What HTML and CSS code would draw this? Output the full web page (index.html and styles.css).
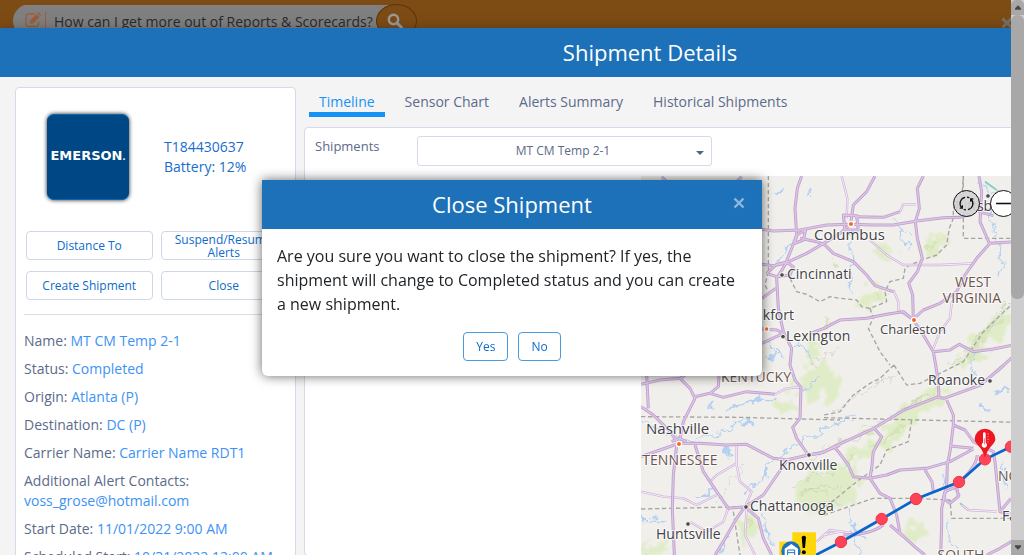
FILE: index.html
```html
<!DOCTYPE html>
<html lang="en">
<head>
<meta charset="utf-8">
<title>Shipment Details</title>
<link rel="stylesheet" href="styles.css">
</head>
<body>
<div class="viewport">
  <header class="topbar">
    <form class="search">
      <svg class="search-edit" viewBox="0 0 16 16" aria-hidden="true"><path d="M10 2H3.500Q1 2 1 4.500V12Q1 14.500 3.500 14.500H11Q13.500 14.500 13.500 12V9.500" fill="none" stroke="currentColor" stroke-width="1.300"/><path d="M5 11.500V8.500L11.500 2 14.500 5 8 11.500ZM12.300 1.200L13.300.300 16 3 15.200 4Z" fill="currentColor"/><path d="M6.200 8.800L7.700 10.300" stroke="#808080"/></svg>
      <input class="search-input" type="text" aria-label="Search help" value="How can I get more out of Reports &amp; Scorecards?">
      <button class="search-button" type="button" aria-label="Search"><svg viewBox="0 0 16 16"><circle cx="6.500" cy="6.500" r="4.700" fill="none" stroke="currentColor" stroke-width="2.400"/><path d="M10 10L14.500 14.500" stroke="currentColor" stroke-width="3" stroke-linecap="round"/></svg></button>
    </form>
    <button class="topbar-close" type="button" aria-label="Dismiss"><svg class="cross" viewBox="0 0 12 12"><path d="M1.500 1.500L10.500 10.500M10.500 1.500L1.500 10.500" stroke="currentColor" stroke-width="3"/></svg></button>
  </header>

  <section class="details">
    <h1 class="dialog-title">Shipment Details</h1>
    <div class="details-body">
      <aside class="card">
        <div class="device">
          <div class="logo"><span>EMERSON<small>.</small></span></div>
          <div class="device-info">T184430637<br>Battery: 12%</div>
        </div>
        <div class="actions">
          <button class="btn" type="button">Distance To</button>
          <button class="btn" type="button">Suspend/Resume Alerts</button>
          <button class="btn" type="button">Create Shipment</button>
          <button class="btn" type="button">Close</button>
        </div>
        <dl class="facts">
          <div><dt>Name:</dt> <dd>MT CM Temp 2-1</dd></div>
          <div><dt>Status:</dt> <dd>Completed</dd></div>
          <div><dt>Origin:</dt> <dd>Atlanta (P)</dd></div>
          <div><dt>Destination:</dt> <dd>DC (P)</dd></div>
          <div><dt>Carrier Name:</dt> <dd>Carrier Name RDT1</dd></div>
          <div><dt>Additional Alert Contacts:</dt> <dd>voss_grose@hotmail.com</dd></div>
          <div><dt>Start Date:</dt> <dd>11/01/2022 9:00 AM</dd></div>
          <div><dt>Scheduled Start:</dt> <dd>10/31/2022 12:00 AM</dd></div>
        </dl>
      </aside>

      <div class="main">
        <nav class="tabs">
          <a class="tab tab-active" href="#timeline">Timeline</a>
          <a class="tab" href="#sensor">Sensor Chart</a>
          <a class="tab" href="#alerts">Alerts Summary</a>
          <a class="tab" href="#history">Historical Shipments</a>
        </nav>
        <div class="panel">
          <div class="picker">
            <label for="shipment">Shipments</label>
            <div class="select-wrap">
              <select id="shipment"><option>MT CM Temp 2-1</option></select>
              <svg viewBox="0 0 8 4" aria-hidden="true"><path d="M0 0H8L4 4Z" fill="currentColor"/></svg>
            </div>
          </div>
          <div class="map">
            <svg class="map-canvas" viewBox="0 0 640 379" role="img" aria-label="Shipment route map">
              <defs>
                <filter id="rough" filterUnits="userSpaceOnUse" x="0" y="0" width="1200" height="1200"><feTurbulence type="fractalNoise" baseFrequency=".035" numOctaves="3" seed="4"/><feDisplacementMap in="SourceGraphic" scale="42" xChannelSelector="R" yChannelSelector="G"/></filter>
                <filter id="soft" filterUnits="userSpaceOnUse" x="0" y="0" width="1200" height="1200"><feTurbulence type="fractalNoise" baseFrequency=".03" numOctaves="3" seed="9" result="n"/><feDisplacementMap in="SourceGraphic" in2="n" scale="90" xChannelSelector="R" yChannelSelector="G"/><feGaussianBlur stdDeviation="3"/></filter>
                <g id="major">
                  <path d="M485 3L472 40 465 100 470 180 455 220 435 270 410 310 415 400 430 470 455 520 450 570 465 615 483 637 480 730 458 757 470 790 505 840"/>
                  <path d="M366 163L400 168 480 165 560 150 632 148 700 150 760 150 830 138 910 128 960 127 1000 115"/>
                  <path d="M435 265L500 235 560 200 600 175 632 147M632 145L640 90 680 50 705 3M645 125L730 127 780 110"/>
                  <path d="M850 3L832 40 838 100 826 140 832 190 847 250 832 290 806 325 818 360 820 435"/>
                  <path d="M480 190L530 200 555 210 580 235 640 260 680 300 705 332 760 350"/>
                  <path d="M820 435L790 410 740 418 680 430 600 435 552 460 510 475M366 462L410 465 430 475M366 370L408 340M366 505L430 475M366 268L400 272 435 265M380 295L410 268 440 262 460 275 450 300 410 305 380 295M470 180L497 165 490 195 465 205 470 180M610 120L650 122 655 165 615 165Z"/>
                  <path d="M820 432L850 405 900 385 950 350 975 300 1010 250 1050 205 1130 200M1050 210L1020 140 1025 50 1017 3M1015 110L1060 122"/>
                  <path d="M820 435L850 480 880 530 930 525 958 508 1000 530 1060 522 1130 508M880 530L887 570 895 620 897 670M1070 590L1130 535"/>
                  <path d="M1092 570L1022 630 912 670 890 667 792 705 702 760 582 815 550 832 505 840 440 855 400 850 320 808 260 810 180 805 117 805 60 825 3 845"/>
                  <path d="M920 675L940 720 940 750 930 830 922 870 920 930 905 1000 905 1050 902 1140M940 750L975 765 1000 800 1060 830 1065 860 1080 1010 1130 1020M930 813L1000 820M1000 822L930 860 860 880 780 885 740 900 690 910 640 905 625 870 595 830 582 815M1012 840Q1010 870 970 910M1010 865Q1003 880 960 920"/>
                  <path d="M702 760L725 785 700 830 695 880 690 910 720 955 750 970 770 1020 780 1075 830 1120 855 1140M730 1050Q690 1080 610 1080M855 885L876 920 880 950M750 1050L790 1085M1080 1010L1113 970M1040 1140L1080 1120 1130 1090"/>
                  <path d="M915 950L950 935 955 965 930 985 910 970ZM110 810L100 900 97 1000 103 1140M117 807L130 740 165 670 150 640 120 610M165 665L210 655 250 667 320 650 405 658M117 807L90 770 40 720 3 695M20 600L25 700M3 628L60 615 120 610 150 590M237 600L235 635 210 655"/>
                  <path d="M165 810L190 890 230 950 265 1000 315 995 370 960 440 858M315 995L290 1030 250 1100 225 1140M315 995L355 1030 370 1090 395 1140M505 840L540 835 600 810M95 800L117 790 140 800M65 5L80 20M305 5L290 20"/>
                </g>
                <g id="minor">
                  <path d="M620 130L622 70 605 3M780 110L790 88 828 88M690 195L740 240 790 270 900 270 1000 265M760 345L775 380 775 405 820 435M880 520L900 470 930 430 935 385 950 350M405 658L440 640 483 637"/>
                  <path d="M290 810L290 870 300 920 335 950 315 995M290 865L230 900 210 920M3 950L70 965 130 970 170 990 230 960M265 1000L250 1040 200 1070 150 1040M320 1000L315 1080 345 1140M530 1100L570 1065 640 1075M552 1080L600 1070M965 990L985 1005 1070 1010M945 940L958 960 930 985"/>
                </g>
              </defs>
              <rect width="640" height="379" fill="#f1efeb"/>
              <g transform="translate(-1 -1) scale(.333333)" stroke-linejoin="round">
                <g filter="url(#soft)" fill="#e0ecc8">
                  <path d="M690 220L740 200 765 230 730 245ZM850 200L890 180 920 200 890 245 850 250ZM660 350L700 335 740 370 710 400 665 395ZM500 520L540 500 550 540 500 570Z"/>
                  <path d="M930 600L980 520 1020 470 1090 390 1130 430 1050 510 970 580 920 600ZM890 690L930 640 900 640 800 690 700 800 610 830 620 860 720 830 780 780ZM460 950L490 910 552 870 640 870 660 930 620 990 552 1020 480 1000Z"/>
                  <path d="M480 590L550 570 600 600 600 650 540 690 470 650ZM300 1040L350 1010 350 1070 310 1110ZM10 1110L60 1095 80 1130 10 1140ZM790 1060L850 1040 860 1100 810 1090ZM410 680L460 660 480 720 420 710Z"/>
                </g>
                <g fill="none" stroke="#d3e2b2" stroke-width="9" opacity=".8" filter="url(#rough)">
                  <path d="M575 260L590 270M570 430L560 460M700 360L720 370M860 220L890 200M690 820L740 790 800 750M1000 520L1040 460 1090 430M800 700L860 660M600 880L650 840M480 960L520 940 560 960M500 1010L580 1000M320 1070L330 1030M960 570L1010 530M640 800L700 770"/>
                </g>
                <g fill="none" stroke="#c3c8bb" stroke-width="3" opacity=".6" filter="url(#rough)">
                  <path d="M1113 390L1060 450 1000 530 930 570M1100 380L1040 460 970 540M575 720L650 660 730 620 790 600M580 810L700 750 800 700 900 640M500 870L570 810 640 780M460 940L520 900 590 890M470 960L540 930 610 940M500 1000L550 980 620 990M230 980L320 860M510 570L600 520"/>
                </g>
                <g fill="none" stroke="#b3d0f3" stroke-width="4" filter="url(#rough)">
                  <path d="M390 500L400 540 410 520 430 550M375 540L400 545 420 530M455 520L490 510 520 560M400 270L440 230 455 200M765 125L780 160 820 180M782 165L790 200 810 220M1050 100L1060 170 1075 220 1085 270 1080 300M1020 20L1040 60 1080 40M632 170L635 260 630 360M1010 540L990 560 1000 600"/>
                  <path d="M210 680L212 710M3 735L40 755 90 780 140 790 200 785 250 770 290 740 330 725M320 690L370 670 410 670M250 820L265 850M170 960L210 950 230 945M320 960L340 930 370 910 385 870 430 830 490 800 560 760 650 720M3 1030L80 1035M260 1090L240 1140M370 1020L380 1080 400 1110M540 600L500 640 460 630M630 1060L650 1100 660 1140M630 1000L640 1060 670 1090M910 890L905 940M922 1030L925 1080 950 1120M1085 860L1095 950"/>
                </g>
                <g fill="none" stroke="#b3d0f3" stroke-width="8" filter="url(#rough)">
                  <path d="M260 705L290 690 340 680 370 670M213 680V705M250 820L270 840M310 735L340 750M180 960L210 958M375 910L385 880M1070 650L1090 645 1100 655M1025 695H1040M390 540L405 550M410 48L435 44M505 50H515M910 900V930M640 1050L655 1080M375 1060L385 1090M265 1080L250 1110"/>
                </g>
                <g fill="none" stroke="#a5a5a4" stroke-width="4" stroke-dasharray="13 8">
                  <path d="M385 3V290M3 725L300 727 600 735M552 728L1130 742M3 1002L315 995M280 1010L300 1140M970 3V190H1130"/>
                  <path d="M385 290L375 330 385 350M450 310L470 350 500 358 540 380 570 365 600 370 650 375 665 395 690 400 740 380 735 350 750 320 790 310 795 280 810 270 860 250 890 240 920 210 928 160 940 130 940 100 965 80 970 3M690 400L700 430 685 460 720 530 750 570M762 570L720 610 690 625 640 660 600 710 552 720M762 570L800 630 840 625 870 610 970 560 1030 470 1113 390M815 735L805 800 740 825 720 870 650 920 552 1000M552 1020L700 970 820 970 930 975 935 1030H1130"/>
                </g>
                <path d="M1035 20L1070 45M960 985L985 1005" stroke="#86d2bd" stroke-width="6"/>
                <g fill="none"><use href="#minor" stroke="#ceb0dc" stroke-width="7"/><use href="#minor" stroke="#f6f0f6" stroke-width="3"/><use href="#major" stroke="#bf9fcf" stroke-width="9"/><use href="#major" stroke="#dcc6e4" stroke-width="4"/></g>
                <g fill="#4b4b4b" stroke="#f6f6f6" stroke-width="3"><circle cx="426" cy="300" r="7"/><circle cx="429" cy="485" r="7"/><circle cx="507" cy="840" r="7"/><circle cx="318" cy="996" r="7"/><circle cx="144" cy="1047" r="7"/><circle cx="1050" cy="618" r="7"/><circle cx="1044" cy="63" r="7"/></g>
                <g fill="#f46a25" stroke="#fff" stroke-width="4"><circle cx="633" cy="147" r="8"/><circle cx="380" cy="462" r="7"/><circle cx="822" cy="435" r="8"/><circle cx="117" cy="807" r="8"/></g>
              </g>
              <g class="labels">
                <text x="173" y="64" class="city-large">Columbus</text>
                <text x="146" y="103">Cincinnati</text>
                <text x="153" y="144" text-anchor="end">Frankfort</text>
                <text x="145" y="165">Lexington</text>
                <text x="239" y="158" class="city-small">Charleston</text>
                <text x="287" y="209">Roanoke</text>
                <text x="5" y="258" class="city-large">Nashville</text>
                <text x="138" y="294">Knoxville</text>
                <text x="109" y="335">Chattanooga</text>
                <text x="15" y="363">Huntsville</text>
                <text x="314" y="35">Pittsburgh</text>
                <text x="361" y="345">Fayetteville</text>
                <g class="states">
                  <text x="332" y="111" text-anchor="middle">WEST</text>
                  <text x="331" y="127" text-anchor="middle">VIRGINIA</text>
                  <text x="115" y="206" text-anchor="middle">KENTUCKY</text>
                  <text x="39" y="289" text-anchor="middle">TENNESSEE</text>
                  <text x="357" y="305">NORTH</text>
                  <text x="320" y="384" text-anchor="middle">SOUTH</text>
                </g>
              </g>
              <g transform="translate(-1 -1) scale(.333333)">
                <path d="M440 1185L603 1101 725 1032 828 972 957 921 1035 853 1113 815 1250 760" fill="none" stroke="#0964cb" stroke-width="8"/>
                <g fill="#ff4458" stroke="#f0334a" stroke-width="3"><circle cx="603" cy="1101" r="17"/><circle cx="725" cy="1032" r="17"/><circle cx="828" cy="972" r="17"/><circle cx="957" cy="921" r="17"/><circle cx="1035" cy="853" r="17"/><circle cx="1113" cy="815" r="17"/></g>
                <path d="M1035 848Q1028 825 1014 811Q1004 800 1004 792A31 31 0 0 1 1066 792Q1066 800 1056 811Q1042 825 1035 848Z" fill="#ed1622"/>
                <path d="M1029 776V803A8 8 0 1 0 1037 803V776A4 4 0 0 0 1029 776Z" fill="#fff"/><path d="M1033 790V808" stroke="#ed1622" stroke-width="2"/><path d="M1042 777H1047M1042 785H1046M1042 793H1047M1042 801H1046" stroke="#fff" stroke-width="2" opacity=".7"/>
                <rect x="418" y="1100" width="75" height="70" fill="#ffd60a"/><rect x="457" y="1072" width="71" height="70" rx="3" fill="#ffd60a"/>
                <path d="M485 1086Q491 1078 498 1086L495 1119H488Z" fill="#000"/><circle cx="491.500" cy="1132" r="6" fill="#000"/>
                <circle cx="453" cy="1128" r="29" fill="#1d71b8"/><path d="M434 1142V1121L454 1107 474 1121V1142Z" fill="#fff"/><path d="M443 1125H464V1142H443ZM443 1133H464" fill="none" stroke="#1d71b8" stroke-width="3"/>
              </g>
            </svg>
            <div class="map-tools">
              <button class="map-tool map-tool-muted" type="button" aria-label="Refresh"><svg viewBox="0 0 18 18"><path d="M7.500 2.500A6.600 6.600 0 0 0 4 13.500M10.500 15.500A6.600 6.600 0 0 0 14 4.500M4.600 10.800V14H1.800M13.400 7.200V4H16.200M9.500 2.300Q11 2.400 12 3M8.500 15.700Q7 15.600 6 15" fill="none" stroke="currentColor" stroke-width="1.300"/></svg></button>
              <button class="map-tool" type="button" aria-label="Zoom out"><svg viewBox="0 0 16 16"><path d="M1 8H15" stroke="currentColor" stroke-width="1.500"/></svg></button>
            </div>
          </div>
        </div>
      </div>
    </div>
  </section>
</div>

<div class="scrollbar" aria-hidden="true">
  <span class="scroll-step scroll-up"><svg viewBox="0 0 8 6"><path d="M4 0L8 4V6H0V4Z"/></svg></span>
  <span class="scroll-track"><span class="scroll-thumb"></span></span>
  <span class="scroll-step"><svg viewBox="0 0 8 6"><path d="M0 0H8V2L4 6 0 2Z"/></svg></span>
</div>

<div class="confirm" role="dialog" aria-labelledby="confirm-title">
  <header class="confirm-head">
    <h2 class="dialog-title" id="confirm-title">Close Shipment</h2>
    <button class="confirm-close" type="button" aria-label="Close dialog"><svg class="cross" viewBox="0 0 12 12"><path d="M1.500 1.500L10.500 10.500M10.500 1.500L1.500 10.500" stroke="currentColor" stroke-width="2.400"/></svg></button>
  </header>
  <div class="confirm-body">
    <p>Are you sure you want to close the shipment? If yes, the shipment will change to Completed status and you can create a new shipment.</p>
    <div class="confirm-actions">
      <button class="btn btn-outline" type="button">Yes</button>
      <button class="btn btn-outline" type="button">No</button>
    </div>
  </div>
</div>
</body>
</html>
```
FILE: styles.css
```css
* { box-sizing: border-box; }
body {
  margin: 0;
  height: 100vh;
  display: flex;
  overflow: hidden;
  background: #7d4c15;
  color: #5c6b8a;
  font: 14px/20px "Open Sans", "Noto Sans", sans-serif;
}
button, input, select { font: inherit; color: inherit; margin: 0; }
button { cursor: pointer; }
.cross { display: block; width: 12px; height: 12px; }
.viewport { flex: 1; min-width: 0; overflow: hidden; display: flex; flex-direction: column; }

.topbar { height: 28px; flex: none; display: flex; justify-content: space-between; align-items: flex-start; padding: 4px 0 0 13px; }
.search { display: flex; width: 404px; height: 34px; background: linear-gradient(#808080, #808080) 0 1px / 386px 33px no-repeat; border-radius: 17px 0 0 17px; }
.search-edit { width: 16px; height: 16px; margin: 8px 4px 0 12px; color: #a05c35; flex: none; }
.search-input { flex: 1; min-width: 0; height: 26px; margin-top: 8px; border: 0; border-left: 1px solid #a05c35; padding: 0 0 8px 8px; background: none; color: #262b30; outline: 0; }
.search-button { flex: none; width: 41px; height: 34px; border: 1px solid #5d3509; border-radius: 50%; background: #7d4c15; padding: 0 4px 0 0; color: #999; display: grid; place-items: center; }
.search-button svg { width: 16px; height: 16px; }
.topbar-close { border: 0; background: none; padding: 13px 0 0; width: 10px; color: #77706a; }

.details { flex: 1; min-width: 1300px; background: #f4f4f4; position: relative; box-shadow: 0 5px 15px rgba(0,0,0,.5); }
.dialog-title { margin: 0; height: 49px; background: #1d71b8; color: #fff; font-size: 22px; font-weight: 400; line-height: 49px; text-align: center; }
.details-body { display: flex; gap: 8px; padding: 10px 15px; align-items: flex-start; }

.card { width: 281px; flex: none; background: #fff; border: 1px solid #d5daea; border-radius: 4px; padding: 26px 8px; }
.device { display: flex; gap: 35px; align-items: center; padding-left: 23px; height: 86px; }
.logo { width: 82px; height: 86px; border-radius: 7px; background: #004785; border: solid #0868b8; border-width: 1px 0; box-shadow: 0 0 4px #222; display: grid; place-items: center; color: #fff; font: 700 13px/16px "DejaVu Sans", sans-serif; }
.logo small { font-size: 8px; }
.device-info { color: #1a6dcc; }
.actions { display: grid; grid-template-columns: 1fr 1fr; gap: 11px 8px; padding: 0 0 0 2px; margin-top: 31px; }
.btn { height: 29px; border: 1px solid #cfd6e6; border-radius: 4px; background: #fff; color: #0d6bcb; font-size: 12px; line-height: 13px; padding: 0 10px; }
.facts { margin: 14px 0 0; border-top: 1px solid #dedede; padding-top: 16px; display: grid; gap: 8px; }
.facts dt, .facts dd { display: inline; margin: 0; }
.facts dd { color: #3d92f5; }

.main { flex: 1; min-width: 0; }
.tabs { display: flex; gap: 10px; padding: 0 5px; margin-bottom: 10px; }
.tab { color: #5c6b8a; text-decoration: none; padding: 5px 10px 0; border-bottom: 5px solid transparent; }
.tab-active { color: #1593f4; border-color: #1593f4; }
.panel { background: #fff; border: 1px solid #d5daea; border-radius: 4px; }
.picker { display: flex; gap: 38px; padding: 8px 10px 10px; font-size: 13px; }
.select-wrap { position: relative; width: 295px; }
.select-wrap select { appearance: none; width: 100%; height: 30px; border: 1px solid #d5daea; border-radius: 3px; background: #fff; text-align: center; text-align-last: center; font-size: 12px; padding: 0 12px 0 8px; }
.select-wrap svg { position: absolute; right: 8px; top: 15px; width: 8px; height: 4px; color: #4e668c; }
.map { position: relative; margin-left: 336px; overflow: hidden; }
.map-canvas { display: block; width: 640px; height: 379px; }
.labels { font-size: 14px; fill: #424247; paint-order: stroke; stroke: rgba(255,255,255,.7); stroke-width: 2px; }
.city-large { font-size: 15px; }
.city-small { font-size: 13px; }
.states { fill: #6d5450; font-size: 14px; }
.map-tools { position: absolute; left: 312px; top: 14px; display: flex; gap: 10px; }
.map-tool { width: 27px; height: 27px; border: 1px solid #111; border-radius: 50%; background: #fff; padding: 0; color: #111; display: grid; place-items: center; }
.map-tool svg { width: 17px; height: 17px; }
.map-tool-muted { background: rgba(212,212,212,.92); }

.scrollbar { width: 13px; flex: none; display: flex; flex-direction: column; background: #cdcdcd; position: relative; }
.scroll-step { height: 15px; background: #a8a8a8; display: grid; place-items: center; }
.scroll-step svg { width: 6px; height: 5px; fill: #484848; }
.scroll-up { border-radius: 5px 5px 0 0; }
.scroll-track { flex: 1; }
.scroll-thumb { display: block; height: 54%; border-radius: 6px; background: #a8a8a8; }

.confirm { position: fixed; left: 50%; top: 180px; width: 500px; margin-left: -250px; background: #fff; border-radius: 0 0 6px 6px; box-shadow: 0 0 12px rgba(0,0,0,.6); color: #212529; }
.confirm-head { position: relative; }
.confirm-close { position: absolute; right: 17px; top: 17px; border: 0; background: none; padding: 0; color: #8eb8dc; }
.confirm-body { padding: 15px; }
.confirm-body p { margin: 0 0 16px; font-size: 16px; line-height: 24px; }
.confirm-actions { display: flex; justify-content: center; gap: 10px; }
.btn-outline { border-color: #4a9be0; padding: 0 12px; }
```
